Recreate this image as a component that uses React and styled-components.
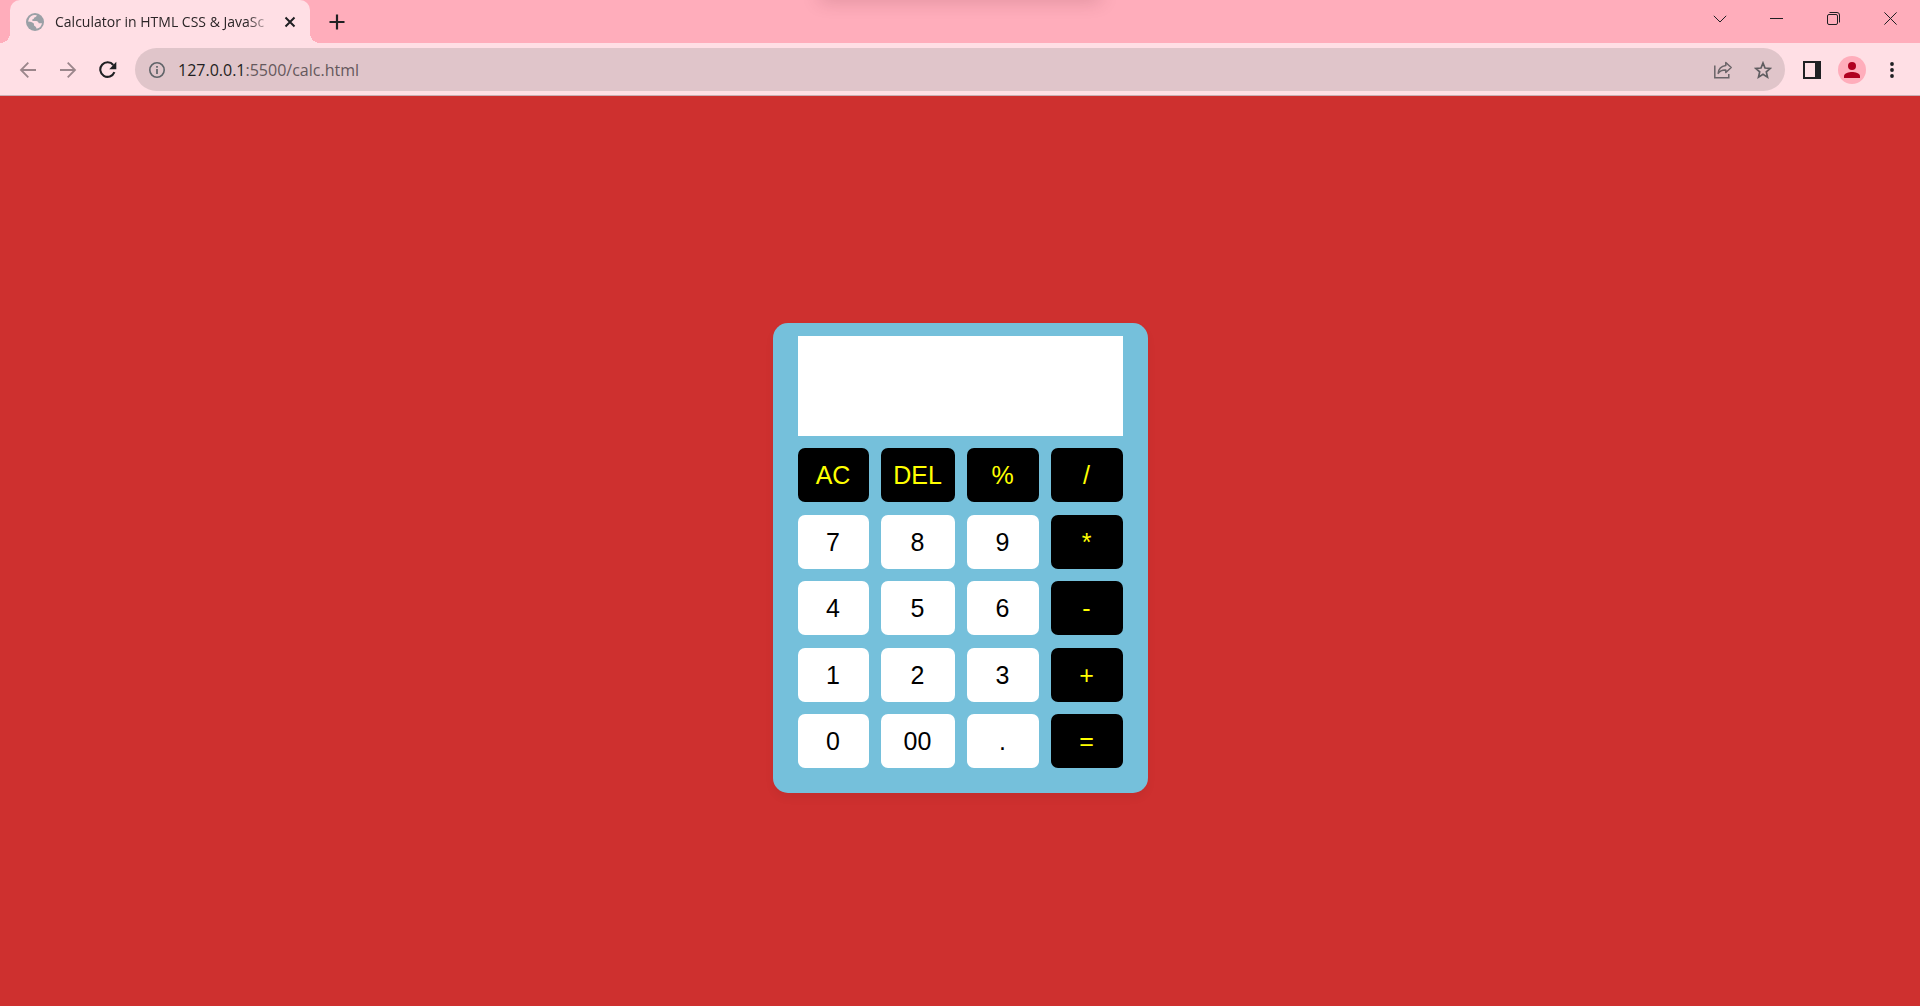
import React, { useState } from "react";
import styled, { createGlobalStyle } from "styled-components";

const GlobalStyle = createGlobalStyle`
  *, *::before, *::after { box-sizing: border-box; }
  body {
    margin: 0;
    background: #ce302f;
    font-family: "Open Sans", "Noto Sans", sans-serif;
  }
  button, input { font: inherit; }
`;

const Page = styled.div`
  display: flex;
  flex-direction: column;
  min-height: 100vh;
`;

const TabStrip = styled.header`
  position: relative;
  display: flex;
  align-items: stretch;
  height: 43px;
  padding-left: 10px;
  background: #ffadbb;
  overflow: hidden;

  &::before {
    content: "";
    position: absolute;
    top: -10px;
    left: 50%;
    width: 280px;
    height: 10px;
    margin-left: -140px;
    box-shadow: 0 0 18px rgba(80, 20, 30, 0.25);
  }
`;

const Tab = styled.div`
  position: relative;
  display: flex;
  align-items: center;
  width: 300px;
  padding: 0 12px 0 16px;
  border-radius: 10px 10px 0 0;
  background: #ffdfe5;

  &::before,
  &::after {
    content: "";
    position: absolute;
    bottom: 0;
    width: 10px;
    height: 10px;
  }
  &::before {
    right: 100%;
    background: radial-gradient(circle at 0 0, transparent 10px, #ffdfe5 10px);
  }
  &::after {
    left: 100%;
    background: radial-gradient(circle at 100% 0, transparent 10px, #ffdfe5 10px);
  }
`;

const TabTitle = styled.span`
  flex: 1;
  margin: 0 9px 0 11px;
  white-space: nowrap;
  font-size: 14px;
  line-height: 20px;
  color: #2b2527;
  mask-image: linear-gradient(to right, #000 calc(100% - 26px), transparent);
`;

const IconButton = styled.button`
  display: grid;
  place-items: center;
  flex: none;
  width: ${(p) => p.$width || 40}px;
  height: ${(p) => p.$height || 40}px;
  padding: 0;
  border: 0;
  background: none;
  color: ${(p) => p.$color || "#1f2023"};

  svg { display: block; }
`;

const NewTab = styled(IconButton)`
  align-self: center;
  margin-left: 11px;
`;

const WindowControls = styled.div`
  display: flex;
  margin-left: auto;
  padding-right: 1px;
`;

const Toolbar = styled.nav`
  display: flex;
  align-items: center;
  height: 53px;
  padding: 1px 8px 0;
  border-bottom: 1px solid #c9afb4;
  background: #ffdfe5;
`;

const AddressBar = styled.div`
  display: flex;
  flex: 1;
  align-items: center;
  height: 43px;
  margin: 0 7px;
  padding: 0 2px 0 14px;
  border-radius: 22px;
  background: #e0c5ca;
`;

const Address = styled.div`
  flex: 1;
  margin-left: 13px;
  font-size: 16px;
  line-height: 22px;
  color: #65585c;
`;

const Host = styled.span`
  color: #1f1f22;
`;

const Avatar = styled.span`
  display: grid;
  place-items: center;
  width: 28px;
  height: 28px;
  border-radius: 50%;
  background: #ffadbb;
`;

const Content = styled.main`
  display: flex;
  flex: 1;
  align-items: center;
  justify-content: center;
  padding-top: 14px;
  background: #ce302f;
`;

const Calculator = styled.section`
  width: 375px;
  padding: 13px 25px 25px;
  border-radius: 15px;
  background: #75c0db;
  box-shadow: 0 5px 10px rgba(0, 0, 0, 0.05);
`;

const Display = styled.input`
  display: block;
  width: 100%;
  height: 100px;
  padding: 0 8px;
  border: 0;
  outline: 0;
  background: #fff;
  text-align: right;
  font-family: "Liberation Sans", Arial, sans-serif;
  font-size: 36px;
`;

const Keys = styled.div`
  display: grid;
  grid-template-columns: 71px 74px 72px 72px;
  grid-auto-rows: 54px;
  justify-content: space-between;
  align-content: space-between;
  height: 320px;
  margin-top: 12px;
`;

const Key = styled.button`
  padding: 0;
  border: 0;
  border-radius: 7px;
  background: ${(p) => (p.$operator ? "#000" : "#fff")};
  color: ${(p) => (p.$operator ? "#ff0" : "#000")};
  font-family: "Liberation Sans", Arial, sans-serif;
  font-size: 25px;
  line-height: 28px;
  cursor: pointer;
`;

const KEYS = [
  "AC", "DEL", "%", "/",
  "7", "8", "9", "*",
  "4", "5", "6", "-",
  "1", "2", "3", "+",
  "0", "00", ".", "=",
];

const OPERATORS = ["AC", "DEL", "%", "/", "*", "-", "+", "="];

const GlobeIcon = () => (
  <svg width="18" height="18" viewBox="0 0 18 18">
    <circle cx="9" cy="9" r="9" fill="#9aa0a6" />
    <path
      d="M10.800 2.300c-.3 1.400-1.300 2.100-2.500 2.300-.3 1.200-1 1.900-2.200 2.100 0 .8.5 1.300 1.500 1.400h2.600c1.500.1 2.200 1 2.500 2.100h3.300a6.900 6.900 0 0 1-5.400 5.500c-.3-1.100-.4-1.800-1.200-2.300-1.300-.4-1.600-1.200-1.400-2.600-.9-1.300-2.700-2.200-6-2.400A6.900 6.900 0 0 1 10.800 2.300z"
      fill="#ffdfe5"
    />
  </svg>
);

const CloseTabIcon = () => (
  <svg width="12" height="12" viewBox="0 0 12 12" fill="none" stroke="currentColor" strokeWidth="2">
    <path d="M1.500 1.500l9 9M10.500 1.500l-9 9" />
  </svg>
);

const PlusIcon = () => (
  <svg width="16" height="16" viewBox="0 0 16 16" fill="none" stroke="currentColor" strokeWidth="2.200">
    <path d="M8 .5v15M.5 8h15" />
  </svg>
);

const ChevronIcon = () => (
  <svg width="14" height="14" viewBox="0 0 14 14" fill="none" stroke="currentColor">
    <path d="M.8 3.800L7 10l6.200-6.200" />
  </svg>
);

const MinimizeIcon = () => (
  <svg width="13" height="13" viewBox="0 0 13 13" fill="none" stroke="currentColor">
    <path d="M0 6.500h13" />
  </svg>
);

const RestoreIcon = () => (
  <svg width="13" height="13" viewBox="0 0 13 13" fill="none" stroke="currentColor">
    <rect x=".5" y="2.500" width="10" height="10" rx="1.500" />
    <path d="M2.500.5H10A2.500 2.500 0 0 1 12.500 3v7.500" />
  </svg>
);

const CloseIcon = () => (
  <svg width="13" height="13" viewBox="0 0 13 13" fill="none" stroke="currentColor">
    <path d="M.4.4l12.200 12.200M12.600.4L.4 12.600" />
  </svg>
);

const ArrowIcon = ({ forward }) => (
  <svg width="18" height="18" viewBox="0 0 18 18" fill="none" stroke="currentColor" strokeWidth="1.800">
    <path d={forward ? "M1 9h15M8.700 1.700L16 9l-7.300 7.300" : "M17 9H2M9.300 1.700L2 9l7.300 7.300"} />
  </svg>
);

const ReloadIcon = () => (
  <svg width="18" height="18" viewBox="0 0 18 18">
    <path d="M15.400 11.200A7.300 7.300 0 1 1 14.300 4" fill="none" stroke="currentColor" strokeWidth="2.100" />
    <path d="M17.300.8v7.400H10.300z" fill="currentColor" />
  </svg>
);

const InfoIcon = () => (
  <svg width="16" height="16" viewBox="0 0 16 16" fill="none" stroke="currentColor">
    <circle cx="8" cy="8" r="7.200" strokeWidth="1.600" />
    <path d="M8 7v5M8 4v1.800" strokeWidth="1.700" />
  </svg>
);

const ShareIcon = () => (
  <svg width="20" height="20" viewBox="0 0 20 20" fill="none" stroke="currentColor" strokeWidth="1.500">
    <path d="M1.800 5.500v12.300h14V14" />
    <path d="M12.800 2.500l5.400 5-5.400 5V9.900c-3.600-.2-6 .9-7.600 3.500.3-4.300 2.800-7.300 7.600-7.900z" strokeLinejoin="round" />
  </svg>
);

const StarIcon = () => (
  <svg width="18" height="18" viewBox="0 0 18 18" fill="none" stroke="currentColor" strokeWidth="1.700">
    <path d="M9 2l2 5 5.300.4-4 3.500 1.200 5.200L9 13.300l-4.500 2.800 1.200-5.200-4-3.500L7 7z" />
  </svg>
);

const SidePanelIcon = () => (
  <svg width="18" height="18" viewBox="0 0 18 18">
    <path d="M0 0h18v18H0zM2 2v14h10V2z" fill="currentColor" fillRule="evenodd" />
  </svg>
);

const PersonIcon = () => (
  <svg width="16" height="16" viewBox="0 0 16 16" fill="#b00020">
    <circle cx="8" cy="4" r="4" />
    <path d="M0 16v-2c0-2.700 5-4 8-4s8 1.300 8 4v2z" />
  </svg>
);

const MenuIcon = () => (
  <svg width="4" height="16" viewBox="0 0 4 16" fill="currentColor">
    <circle cx="2" cy="2" r="1.900" />
    <circle cx="2" cy="8" r="1.900" />
    <circle cx="2" cy="14" r="1.900" />
  </svg>
);

function evaluate(expression) {
  const tokens = expression.replace(/%/g, "/100").match(/\d*\.?\d+|[-+*/]/g) || [];
  const terms = [];
  let operator = "+";
  tokens.forEach((token) => {
    if (/^[-+*/]$/.test(token)) {
      operator = token;
      return;
    }
    const value = Number(token);
    if (operator === "*") terms.push(terms.pop() * value);
    else if (operator === "/") terms.push(terms.pop() / value);
    else terms.push(operator === "-" ? -value : value);
  });
  return String(terms.reduce((sum, term) => sum + term, 0));
}

export default function App() {
  const [output, setOutput] = useState("");

  const press = (key) => {
    if (key === "AC") setOutput("");
    else if (key === "DEL") setOutput(output.slice(0, -1));
    else if (key === "=") setOutput(output && evaluate(output));
    else setOutput(output + key);
  };

  return (
    <Page>
      <GlobalStyle />
      <TabStrip>
        <Tab>
          <GlobeIcon />
          <TabTitle>Calculator in HTML CSS &amp; JavaSc</TabTitle>
          <IconButton $width={16} $height={20} aria-label="Close tab"><CloseTabIcon /></IconButton>
        </Tab>
        <NewTab $width={32} $height={32} aria-label="New tab"><PlusIcon /></NewTab>
        <WindowControls>
          <IconButton $width={57} $height={37} aria-label="Search tabs"><ChevronIcon /></IconButton>
          <IconButton $width={57} $height={37} aria-label="Minimize"><MinimizeIcon /></IconButton>
          <IconButton $width={57} $height={37} aria-label="Restore"><RestoreIcon /></IconButton>
          <IconButton $width={57} $height={37} aria-label="Close window"><CloseIcon /></IconButton>
        </WindowControls>
      </TabStrip>
      <Toolbar>
        <IconButton $color="#9b868b" aria-label="Back"><ArrowIcon /></IconButton>
        <IconButton $color="#9b868b" aria-label="Forward"><ArrowIcon forward /></IconButton>
        <IconButton aria-label="Reload"><ReloadIcon /></IconButton>
        <AddressBar>
          <IconButton $width={16} $height={16} $color="#5f6368" aria-label="Site information"><InfoIcon /></IconButton>
          <Address><Host>127.0.0.1</Host>:5500/calc.html</Address>
          <IconButton $color="#6a6468" aria-label="Share"><ShareIcon /></IconButton>
          <IconButton $color="#5f5c60" aria-label="Bookmark"><StarIcon /></IconButton>
        </AddressBar>
        <IconButton aria-label="Side panel"><SidePanelIcon /></IconButton>
        <IconButton aria-label="Profile"><Avatar><PersonIcon /></Avatar></IconButton>
        <IconButton aria-label="Menu"><MenuIcon /></IconButton>
      </Toolbar>
      <Content>
        <Calculator>
          <Display type="text" aria-label="Result" value={output} readOnly />
          <Keys>
            {KEYS.map((key) => (
              <Key key={key} $operator={OPERATORS.includes(key)} onClick={() => press(key)}>
                {key}
              </Key>
            ))}
          </Keys>
        </Calculator>
      </Content>
    </Page>
  );
}
